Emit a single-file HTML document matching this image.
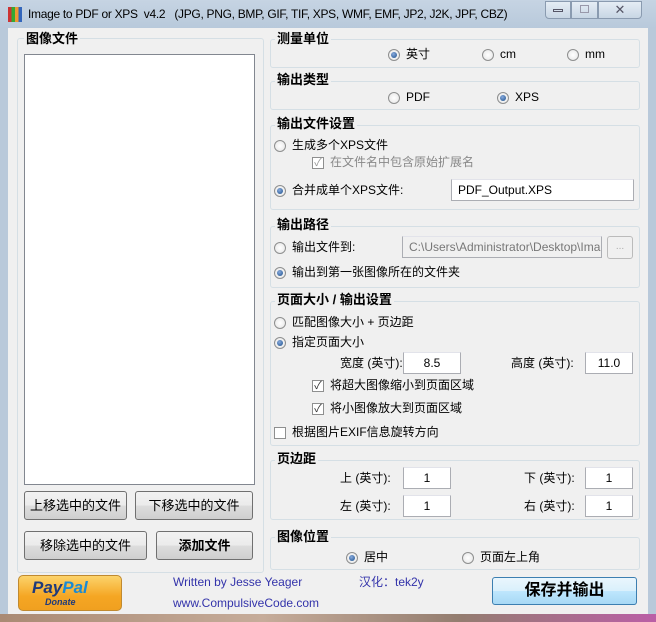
<!DOCTYPE html>
<html><head><meta charset="utf-8"><style>
*{box-sizing:border-box;margin:0;padding:0}
body{width:656px;height:622px;overflow:hidden;background:#b9c9da;font-family:"Liberation Sans","Noto Sans CJK SC",sans-serif;font-size:12px;color:#000;position:relative}
.a{position:absolute;white-space:nowrap;line-height:15px}
.client{position:absolute;left:8px;top:28px;width:640px;height:586px;background:#f0f0f0}
.grp{position:absolute;border:1px solid #d5dfe5;border-radius:3px}
.gt{position:absolute;font-weight:bold;font-size:13px;background:#f0f0f0;padding:0 2px;line-height:14px}
.r{position:absolute;width:12px;height:12px;border-radius:50%;border:1px solid #8e8f8f;background:radial-gradient(#fff,#e4e4e4)}
.r.on::after{content:"";position:absolute;left:2px;top:2px;width:6px;height:6px;border-radius:50%;background:radial-gradient(circle at 40% 35%,#8ad,#1b4f8a)}
.c{position:absolute;width:12px;height:12px;border:1px solid #8e8f8f;background:#fff;font-size:11px;line-height:10px;text-align:center;color:#333}
.tb{position:absolute;height:22px;background:#fff;border:1px solid #abadb3;border-top-color:#e2e3ea;padding:3px 6px;font-size:12px;line-height:14px}
.btn{position:absolute;border:1px solid #707070;border-radius:3px;background:linear-gradient(#f2f2f2,#ebebeb 50%,#dddddd 51%,#cfcfcf);text-align:center;font-size:13px}
</style></head><body>
<div class="a" style="left:0;top:0;width:656px;height:28px;background:linear-gradient(#c6d4e3,#b8c9db)"></div>
<div class="a" style="left:8px;top:7px;width:14px;height:15px;background:linear-gradient(90deg,#c33 0 25%,#3a3 25% 50%,#e93 50% 75%,#36b 75%)"></div>
<div class="a" style="left:28px;top:7px;font-size:12px;letter-spacing:-0.3px">Image to PDF or XPS&nbsp; v4.2&nbsp;&nbsp; (JPG, PNG, BMP, GIF, TIF, XPS, WMF, EMF, JP2, J2K, JPF, CBZ)</div>
<div class="a" style="left:545px;top:1px;width:26px;height:18px;border:1px solid #8a9bb0;border-radius:0 0 0 4px;background:linear-gradient(#e5edf5,#c8d6e4)"></div>
<div class="a" style="left:553px;top:9px;width:10px;height:3px;border:1px solid #556"></div>
<div class="a" style="left:571px;top:1px;width:27px;height:18px;border:1px solid #8a9bb0;background:linear-gradient(#e5edf5,#c8d6e4)"></div>
<div class="a" style="left:580px;top:5px;width:9px;height:8px;border:1px solid #99a"></div>
<div class="a" style="left:598px;top:1px;width:44px;height:18px;border:1px solid #8a9bb0;border-radius:0 0 4px 0;background:linear-gradient(#e5edf5,#c8d6e4);text-align:center;font-size:13px;color:#556;line-height:16px">✕</div>
<div class="client"></div>
<div class="a" style="left:0;top:614px;width:656px;height:8px;background:linear-gradient(90deg,#a67a5a,#c9a58a 40%,#8a6a55 70%,#b49 100%);opacity:.8"></div>

<div class="grp" style="left:17px;top:38px;width:247px;height:535px"></div>
<div class="gt" style="left:24px;top:32px">图像文件</div>
<div class="a" style="left:24px;top:54px;width:231px;height:431px;background:#fff;border:1px solid #828790"></div>
<div class="btn" style="left:24px;top:491px;width:103px;height:29px;line-height:27px">上移选中的文件</div>
<div class="btn" style="left:135px;top:491px;width:118px;height:29px;line-height:27px">下移选中的文件</div>
<div class="btn" style="left:24px;top:531px;width:123px;height:29px;line-height:27px">移除选中的文件</div>
<div class="btn" style="left:156px;top:531px;width:97px;height:29px;line-height:27px;font-weight:bold">添加文件</div>

<div class="grp" style="left:270px;top:39px;width:370px;height:29px"></div>
<div class="gt" style="left:275px;top:32px">测量单位</div>
<div class="r on" style="left:388px;top:49px"></div><div class="a" style="left:406px;top:47px">英寸</div>
<div class="r" style="left:482px;top:49px"></div><div class="a" style="left:500px;top:47px">cm</div>
<div class="r" style="left:567px;top:49px"></div><div class="a" style="left:585px;top:47px">mm</div>

<div class="grp" style="left:270px;top:81px;width:370px;height:29px"></div>
<div class="gt" style="left:275px;top:73px">输出类型</div>
<div class="r" style="left:388px;top:92px"></div><div class="a" style="left:406px;top:90px">PDF</div>
<div class="r on" style="left:497px;top:92px"></div><div class="a" style="left:515px;top:90px">XPS</div>

<div class="grp" style="left:270px;top:125px;width:370px;height:85px"></div>
<div class="gt" style="left:275px;top:117px">输出文件设置</div>
<div class="r" style="left:274px;top:140px"></div><div class="a" style="left:292px;top:138px">生成多个XPS文件</div>
<div class="c" style="left:312px;top:157px;color:#999">✓</div><div class="a" style="left:330px;top:155px;color:#888">在文件名中包含原始扩展名</div>
<div class="r on" style="left:274px;top:185px"></div><div class="a" style="left:292px;top:183px">合并成单个XPS文件:</div>
<div class="tb" style="left:451px;top:179px;width:183px">PDF_Output.XPS</div>

<div class="grp" style="left:270px;top:226px;width:370px;height:62px"></div>
<div class="gt" style="left:275px;top:218px">输出路径</div>
<div class="r" style="left:274px;top:242px"></div><div class="a" style="left:292px;top:240px">输出文件到:</div>
<div class="tb" style="left:402px;top:236px;width:200px;background:#f0f0f0;color:#777;overflow:hidden">C:\Users\Administrator\Desktop\Ima</div>
<div class="a" style="left:607px;top:236px;width:26px;height:23px;border:1px solid #bbb;border-radius:3px;color:#aaa;text-align:center;font-size:10px;line-height:20px">...</div>
<div class="r on" style="left:274px;top:267px"></div><div class="a" style="left:292px;top:265px">输出到第一张图像所在的文件夹</div>

<div class="grp" style="left:270px;top:301px;width:370px;height:145px"></div>
<div class="gt" style="left:275px;top:293px">页面大小 / 输出设置</div>
<div class="r" style="left:274px;top:317px"></div><div class="a" style="left:292px;top:315px">匹配图像大小 + 页边距</div>
<div class="r on" style="left:274px;top:337px"></div><div class="a" style="left:292px;top:335px">指定页面大小</div>
<div class="a" style="left:340px;top:356px">宽度 (英寸):</div>
<div class="tb" style="left:403px;top:352px;width:58px;text-align:center">8.5</div>
<div class="a" style="left:511px;top:356px">高度 (英寸):</div>
<div class="tb" style="left:585px;top:352px;width:48px;text-align:center">11.0</div>
<div class="c" style="left:312px;top:380px">✓</div><div class="a" style="left:330px;top:378px">将超大图像缩小到页面区域</div>
<div class="c" style="left:312px;top:403px">✓</div><div class="a" style="left:330px;top:401px">将小图像放大到页面区域</div>
<div class="c" style="left:274px;top:427px"></div><div class="a" style="left:292px;top:425px">根据图片EXIF信息旋转方向</div>

<div class="grp" style="left:270px;top:460px;width:370px;height:60px"></div>
<div class="gt" style="left:275px;top:452px">页边距</div>
<div class="a" style="left:340px;top:471px">上 (英寸):</div>
<div class="tb" style="left:403px;top:467px;width:48px;text-align:center">1</div>
<div class="a" style="left:524px;top:471px">下 (英寸):</div>
<div class="tb" style="left:585px;top:467px;width:48px;text-align:center">1</div>
<div class="a" style="left:340px;top:499px">左 (英寸):</div>
<div class="tb" style="left:403px;top:495px;width:48px;text-align:center">1</div>
<div class="a" style="left:524px;top:499px">右 (英寸):</div>
<div class="tb" style="left:585px;top:495px;width:48px;text-align:center">1</div>

<div class="grp" style="left:270px;top:537px;width:370px;height:33px"></div>
<div class="gt" style="left:275px;top:530px">图像位置</div>
<div class="r on" style="left:346px;top:552px"></div><div class="a" style="left:364px;top:550px">居中</div>
<div class="r" style="left:462px;top:552px"></div><div class="a" style="left:480px;top:550px">页面左上角</div>

<div class="a" style="left:18px;top:575px;width:104px;height:36px;border:1px solid #c08a30;border-radius:5px;background:linear-gradient(#fcd36b,#f5a623 60%,#f0a020)"></div>
<div class="a" style="left:32px;top:578px;font-size:17px;font-weight:bold;font-style:italic;color:#1e3a7b;line-height:20px">Pay<span style="color:#1a8ad4">Pal</span></div>
<div class="a" style="left:45px;top:597px;font-size:9px;font-weight:bold;font-style:italic;color:#1e3a7b;line-height:11px">Donate</div>
<div class="a" style="left:173px;top:575px;color:#3333aa">Written by Jesse Yeager</div>
<div class="a" style="left:173px;top:596px;color:#3333aa">www.CompulsiveCode.com</div>
<div class="a" style="left:359px;top:575px;color:#3333aa">汉化：tek2y</div>
<div class="a" style="left:492px;top:577px;width:145px;height:28px;border:1px solid #3c7fb1;border-radius:3px;background:linear-gradient(#eaf6fd,#d9f0fc 50%,#bee6fd 51%,#a7d9f5);text-align:center;font-size:16px;font-weight:bold;line-height:26px">保存并输出</div>
</body></html>
